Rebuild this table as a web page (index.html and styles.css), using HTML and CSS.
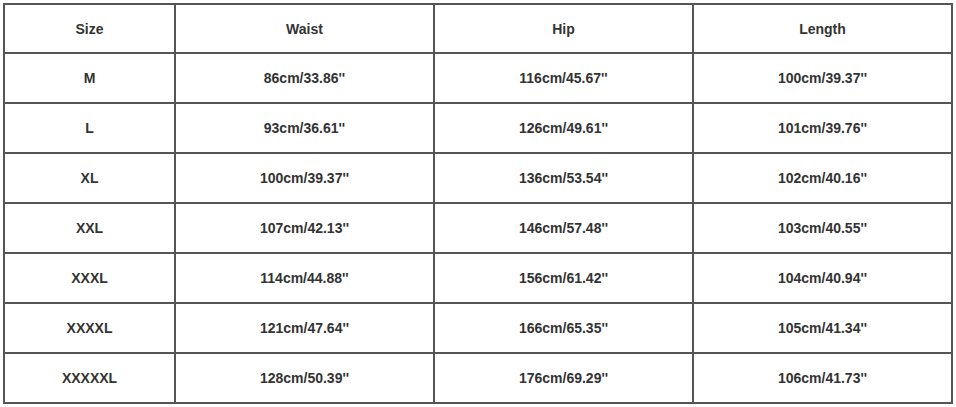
FILE: index.html
```html
<!DOCTYPE html>
<html>
<head>
<meta charset="utf-8">
<link rel="stylesheet" href="styles.css">
</head>
<body>
<table class="size-table">
  <colgroup>
    <col class="c-size">
    <col class="c-val">
    <col class="c-val">
    <col class="c-val">
  </colgroup>
  <thead>
    <tr class="head"><th>Size</th><th>Waist</th><th>Hip</th><th>Length</th></tr>
  </thead>
  <tbody>
    <tr><td>M</td><td>86cm/33.86''</td><td>116cm/45.67''</td><td>100cm/39.37''</td></tr>
    <tr><td>L</td><td>93cm/36.61''</td><td>126cm/49.61''</td><td>101cm/39.76''</td></tr>
    <tr><td>XL</td><td>100cm/39.37''</td><td>136cm/53.54''</td><td>102cm/40.16''</td></tr>
    <tr><td>XXL</td><td>107cm/42.13''</td><td>146cm/57.48''</td><td>103cm/40.55''</td></tr>
    <tr><td>XXXL</td><td>114cm/44.88''</td><td>156cm/61.42''</td><td>104cm/40.94''</td></tr>
    <tr><td>XXXXL</td><td>121cm/47.64''</td><td>166cm/65.35''</td><td>105cm/41.34''</td></tr>
    <tr><td>XXXXXL</td><td>128cm/50.39''</td><td>176cm/69.29''</td><td>106cm/41.73''</td></tr>
  </tbody>
</table>
</body>
</html>
```
FILE: styles.css
```css
html, body {
  margin: 0;
  padding: 0;
  background: #fff;
}
body {
  padding: 3px 0 0 3px;
}
.size-table {
  border-collapse: collapse;
  table-layout: fixed;
  width: 950px;
  font-family: "Liberation Sans", Arial, sans-serif;
  font-weight: bold;
  font-size: 14px;
  color: #333;
}
.c-size { width: 171px; }
.c-val { width: 259px; }
.size-table th,
.size-table td {
  border: 2px solid #555;
  text-align: center;
  vertical-align: middle;
  height: 48px;
  padding: 0;
  font-weight: bold;
}
.size-table .head th {
  height: 47px;
}
```
